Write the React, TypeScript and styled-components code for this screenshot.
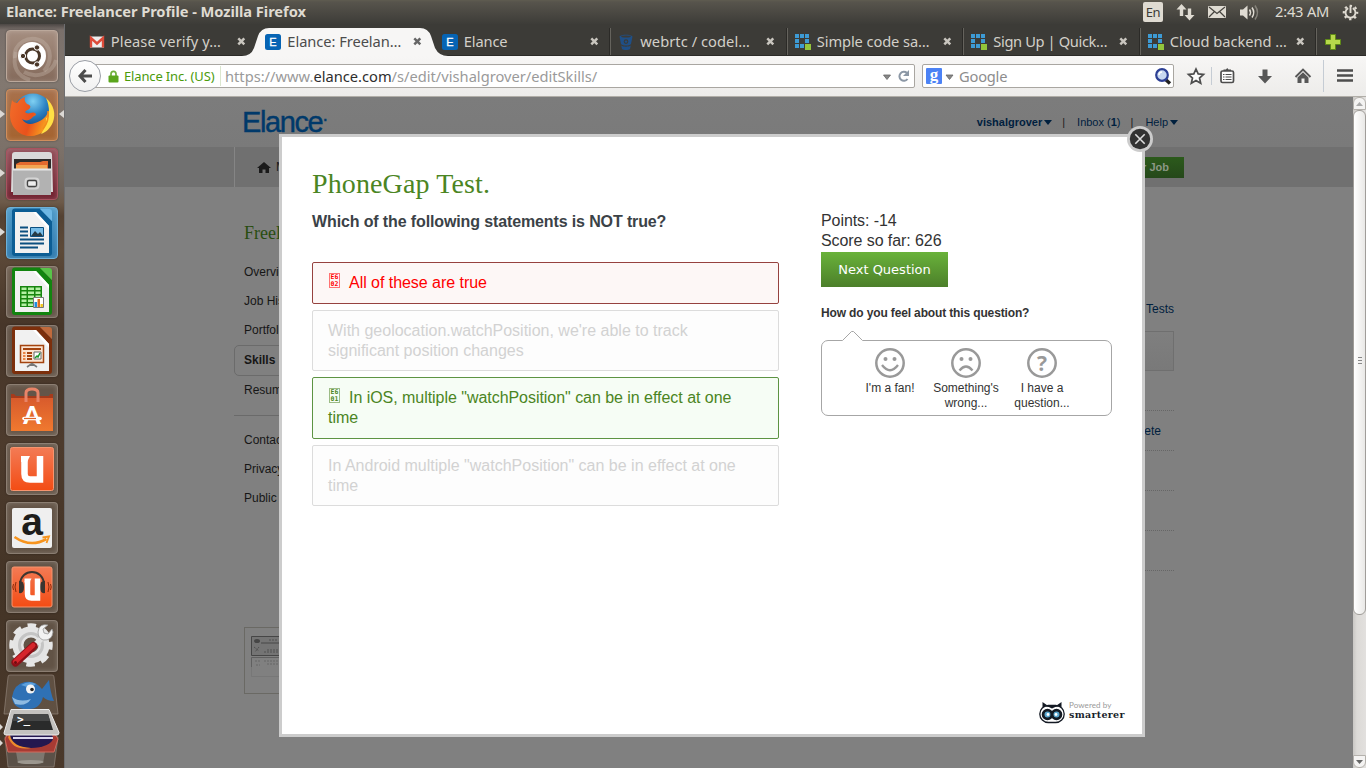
import React from 'react';
import styled, { createGlobalStyle } from 'styled-components';

const GlobalStyle = createGlobalStyle`
  * { box-sizing: border-box; }
  body { margin: 0; overflow: hidden; background: #808080; }
  svg { display: block; flex: none; overflow: visible; }
`;

const ui = '"Noto Sans", "Open Sans", sans-serif';
const arial = '"Liberation Sans", Arial, sans-serif';
const times = '"Liberation Serif", "Times New Roman", serif';

/* ---------- Desktop shell ---------- */
const Desktop = styled.div`
  width: 1366px;
  height: 768px;
  display: flex;
  flex-direction: column;
  overflow: hidden;
  font-family: ${arial};
`;
const Panel = styled.header`
  height: 24px;
  flex: none;
  display: flex;
  align-items: center;
  padding: 0 7px 0 6px;
  background: linear-gradient(#5f5c50 0, #57544c 2px, #3d3c38 24px);
  color: #dfdbd2;
  font-family: ${ui};
`;
const PanelTitle = styled.div`
  flex: 1;
  margin-bottom: 2px;
  font-size: 14.67px;
  font-weight: 700;
  line-height: 22px;
  letter-spacing: -0.06px;
  white-space: nowrap;
`;
const Lang = styled.div`
  width: 20px;
  height: 20px;
  margin-right: 13px;
  border-radius: 2px;
  background: #dfdbd2;
  color: #3c3b37;
  font-size: 13px;
  line-height: 20px;
  text-align: center;
  letter-spacing: -0.5px;
`;
const Clock = styled.div`
  width: 55px;
  margin: 0 12px 2px 13px;
  font-size: 14.67px;
  line-height: 20px;
  letter-spacing: -0.2px;
  white-space: nowrap;
`;
const Below = styled.div`
  flex: 1;
  min-height: 0;
  display: flex;
`;

/* ---------- Launcher ---------- */
const Launcher = styled.aside`
  width: 65px;
  flex: none;
  display: flex;
  flex-direction: column;
  align-items: center;
  gap: 7px;
  padding: 6px 1px 0 0;
  border-right: 1px solid #6e6e70;
  background: linear-gradient(#4c4744 0, #7a706b 6px, #827870 60px, #7b7068 130px, #6e6258 165px, #6d5a49 178px, #544233 192px, #5d4a39 226px, #473629 300px, #4d3b2d 420px, #443426 560px, #4a392b 744px);
`;
const Tile = styled.div<{ $tint: string; $edge?: string }>`
  position: relative;
  width: 52px;
  height: 52px;
  flex: none;
  border-radius: 4px;
  border: 1px solid ${(p) => p.$edge ?? 'rgba(200,190,180,0.4)'};
  background: ${(p) => p.$tint};
  box-shadow: inset 0 0 5px rgba(255, 255, 255, 0.2), 0 0 2px rgba(0, 0, 0, 0.4);
  & > svg { margin: -1px; }
`;
const Pip = styled.i<{ $side: 'left' | 'right' }>`
  position: absolute;
  top: 20px;
  ${(p) => p.$side}: -7px;
  border: 4px solid transparent;
  border-${(p) => p.$side}: 5px solid #dcd9d5;
  border-${(p) => (p.$side === 'left' ? 'right' : 'left')}: 0;
`;
const Stack = styled.div`
  margin: -7px 0 0 -1px;
  width: 64px;
  height: 96px;
  flex: none;
`;

/* ---------- Browser chrome ---------- */
const Browser = styled.main`
  flex: 1;
  min-width: 0;
  display: flex;
  flex-direction: column;
`;
const TabStrip = styled.div`
  height: 32px;
  flex: none;
  display: flex;
  padding-left: 15.5px;
  background: #3c3b37;
  box-shadow: inset 0 -1px 0 #2c2b28;
`;
const TabBox = styled.div<{ $active?: boolean; $sep?: boolean }>`
  position: relative;
  width: 176.5px;
  flex: none;
  height: 32px;
  display: flex;
  align-items: center;
  padding: 3px 11.5px 0 8px;
  font-family: ${ui};
  font-size: 14.67px;
  color: ${(p) => (p.$active ? '#4c4c4c' : '#d3d0c9')};
  &::after {
    content: '';
    display: ${(p) => (p.$sep ? 'block' : 'none')};
    position: absolute;
    right: -1px;
    top: 4px;
    bottom: 1px;
    width: 2px;
    background: linear-gradient(90deg, #2b2a27 50%, #65635d 50%);
  }
`;
const TabShape = styled.svg`
  position: absolute;
  left: -15px;
  top: 0;
`;
const TabLabel = styled.span<{ $ls: number }>`
  position: relative;
  flex: 1;
  margin: 0 0 2px 5.3px;
  line-height: 22px;
  white-space: nowrap;
  letter-spacing: ${(p) => p.$ls}px;
`;
const TabIcon = styled.svg`
  position: relative;
`;
const NavBar = styled.div`
  height: 41px;
  flex: none;
  display: flex;
  align-items: center;
  padding-left: 4px;
  border-bottom: 1px solid #b1aea8;
  background: linear-gradient(#f7f6f5, #edecea);
  font-family: ${ui};
`;
const BackButton = styled.div`
  position: relative;
  width: 32px;
  height: 32px;
  flex: none;
  border: 1px solid #9a9ea6;
  border-radius: 50%;
  background: linear-gradient(#fff, #f0f0f0);
  display: grid;
  place-items: center;
`;
const UrlBar = styled.div`
  width: 829px;
  height: 24px;
  margin-left: -15px;
  padding: 0 4px 0 20.5px;
  flex: none;
  display: flex;
  align-items: center;
  border: 1px solid #a9a6a1;
  border-radius: 2px;
  background: #fff;
  font-size: 14.67px;
  white-space: nowrap;
`;
const Identity = styled.span`
  width: 97px;
  margin-left: 5.5px;
  padding-right: 5px;
  border-right: 1px solid #dbe6cf;
  color: #4b9b0c;
  font-size: 13px;
  line-height: 20px;
  letter-spacing: -0.15px;
`;
const Url = styled.span`
  flex: 1;
  margin-left: 4px;
  color: #9a9a9a;
  letter-spacing: 0;
  b { color: #2e2e2e; font-weight: 400; }
`;
const SearchBar = styled.div`
  width: 252px;
  height: 24px;
  margin-left: 7px;
  padding: 0 1px 0 3px;
  flex: none;
  display: flex;
  align-items: center;
  border: 1px solid #a9a6a1;
  border-radius: 2px;
  background: #fff;
  color: #8d8d8d;
  font-size: 14.67px;
  span { flex: 1; margin-left: 5px; letter-spacing: -0.2px; }
`;
const Tools = styled.div`
  flex: 1;
  height: 100%;
`;

/* ---------- Page behind the dialog ---------- */
const Viewport = styled.div`
  position: relative;
  flex: 1;
  min-height: 0;
  display: flex;
`;
const Page = styled.div`
  flex: 1;
  min-width: 0;
  background: #808080;
  font-size: 12px;
  color: #161616;
`;
const Center = styled.div`
  width: 950px;
  height: 100%;
  margin: 0 auto;
  display: flex;
`;
const SiteHeader = styled.div`
  height: 50px;
  background: linear-gradient(#7c7c7c, #7a7a7a);
`;
const Brand = styled.div`
  flex: 1;
  padding: 7px 0 0 8px;
  color: #00396a;
  font-size: 29px;
  line-height: 36px;
  letter-spacing: -1.4px;
  -webkit-text-stroke: 0.4px #00396a;
  sup { font-size: 18px; line-height: 0; vertical-align: 7px; }
`;
const Account = styled.div`
  display: flex;
  align-items: center;
  height: 50px;
  padding-right: 6px;
  font-size: 11px;
  color: #00203e;
`;
const Caret = styled.i`
  margin-left: 2px;
  border: 4px solid transparent;
  border-top: 5px solid #00203e;
  border-bottom: 0;
`;
const Bar = styled.span`
  margin: 0 12px 0 10px;
  color: #1c1c1c;
`;
const SiteNav = styled.div`
  height: 40px;
  background: #707070;
`;
const NavHome = styled.div`
  flex: 1;
  display: flex;
  align-items: center;
  gap: 5px;
  padding-left: 22px;
  border-left: 1px solid #858585;
  color: #1a1a1a;
`;
const PostJob = styled.div`
  align-self: center;
  width: 100px;
  height: 21px;
  padding-right: 15px;
  text-align: right;
  font-weight: 700;
  font-size: 11px;
  line-height: 21px;
  color: #8c9886;
  background: linear-gradient(#2c5a1c, #25481a);
`;
const SiteBody = styled.div`
  height: 581px;
`;
const SideBar = styled.div`
  width: 200px;
  padding-top: 34px;
`;
const SideTitle = styled.div`
  height: 37px;
  padding: 0 0 0 10px;
  font-family: ${times};
  font-size: 18px;
  line-height: 24px;
  color: #294d10;
`;
const SideItem = styled.div<{ $on?: boolean }>`
  height: ${(p) => (p.$on ? 31 : 29)}px;
  padding-left: ${(p) => (p.$on ? 9 : 10)}px;
  line-height: 29px;
  border: ${(p) => (p.$on ? '1px solid #6b6b6b' : '0')};
  border-radius: 5px;
  font-weight: ${(p) => (p.$on ? 700 : 400)};
`;
const SideRule = styled.div`
  height: 1px;
  margin: 10px 0 10px;
  background: #6a6a6a;
`;
const Thumb = styled.div`
  margin: 114px 0 0 10px;
  height: 67px;
  padding: 8px 0 0 6px;
  border: 1px solid #6a6964;
`;
const Listing = styled.div`
  flex: 1;
  padding: 112px 10px 0 0;
  display: flex;
  flex-direction: column;
  text-align: right;
  color: #00203e;
`;
const ListHead = styled.div`
  height: 32px;
  line-height: 20px;
`;
const ListPanel = styled.div`
  height: 40px;
  border: 1px solid #6f6f6f;
  background: linear-gradient(#7f7f7f, #797979);
`;
const ListRow = styled.div`
  height: 40px;
  padding-right: 13px;
  line-height: 41px;
  border-bottom: 1px dotted #666;
`;

/* ---------- Scrollbar ---------- */
const Scroll = styled.div`
  width: 13px;
  flex: none;
  display: flex;
  flex-direction: column;
  background: linear-gradient(90deg, #c9c7c4, #dcdad7 30%, #e2e0de);
`;
const ScrollButton = styled.div<{ $up?: boolean }>`
  height: 13px;
  display: grid;
  place-items: center;
  background: #f4f3f2;
  border: 1px solid #b4b1ac;
  border-radius: ${(p) => (p.$up ? '6px 6px 0 0' : '0 0 6px 6px')};
`;
const ScrollThumb = styled.div`
  height: 505px;
  margin-bottom: auto;
  display: grid;
  place-items: center;
  border: 1px solid #a09d99;
  border-radius: 6px;
  background: linear-gradient(90deg, #fff, #e9e8e6);
  svg { margin-top: -3px; }
`;

/* ---------- Dialog ---------- */
const Dialog = styled.section`
  position: absolute;
  left: 214px;
  top: 37px;
  width: 866px;
  height: 603px;
  border: 3px solid #ccc;
  background: #fff;
  padding: 0 30px;
  display: flex;
  flex-direction: column;
`;
const CloseButton = styled.div`
  position: absolute;
  right: -11px;
  top: -11px;
`;
const Title = styled.h1`
  margin: 29px 0 0;
  height: 36px;
  font: 400 28px/36px ${times};
  letter-spacing: 0.12px;
  color: #4b8523;
`;
const Columns = styled.div`
  flex: 1;
  display: flex;
  gap: 42px;
`;
const QuestionCol = styled.div`
  width: 467px;
  padding-top: 10px;
`;
const Question = styled.h2`
  margin: 0 0 29px;
  font: 700 16px/20px ${arial};
  letter-spacing: -0.125px;
  height: 21px;
  color: #3b4247;
`;
const tones = {
  wrong: { line: '#96423f', bg: '#fdf7f6', ink: '#ff0000' },
  right: { line: '#5d9443', bg: '#f6fdf5', ink: '#4b8523' },
  idle: { line: '#dcdcdc', bg: '#fdfdfd', ink: '#d2d2d2' },
};
type Tone = keyof typeof tones;
const Answer = styled.div<{ $tone: Tone }>`
  margin-bottom: 6px;
  padding: 10.3px 30px 9.8px 15px;
  border: 1px solid ${(p) => tones[p.$tone].line};
  border-radius: 2px;
  background: ${(p) => tones[p.$tone].bg};
  color: ${(p) => tones[p.$tone].ink};
  font-size: 16px;
  line-height: 19.65px;
  letter-spacing: ${(p) => (p.$tone === 'idle' ? 0 : -0.04)}px;
`;
const HexBox = styled.span`
  display: inline-block;
  overflow: hidden;
  vertical-align: 0;
  width: 11px;
  height: 15px;
  margin: 0 9px 0 1px;
  border: 1px solid color-mix(in srgb, currentColor 55%, white);
  font: 700 6.5px/6.5px "DejaVu Sans Mono", monospace;
  letter-spacing: 0;
  word-break: break-all;
  text-align: center;
`;
const SideCol = styled.div`
  width: 291px;
  padding-top: 9px;
  font-size: 16px;
  line-height: 20px;
  letter-spacing: -0.08px;
  color: #333;
`;
const NextButton = styled.div`
  width: 127px;
  height: 35px;
  margin-top: 1px;
  background: linear-gradient(#69b23a, #4c7f2a);
  color: #fff;
  font: 13px/35px "DejaVu Sans", sans-serif;
  letter-spacing: 0;
  text-align: center;
`;
const Feel = styled.div`
  margin: 19px 0 19px;
  font: 700 12px/15px ${arial};
  letter-spacing: -0.14px;
`;
const Bubble = styled.div`
  position: relative;
  height: 76px;
  padding: 7px 0 0 30px;
  display: flex;
  border: 1px solid #a6a6a6;
  border-radius: 7px;
`;
const Nub = styled.svg`
  position: absolute;
  left: 20px;
  top: -11px;
`;
const Mood = styled.div`
  width: 76px;
  display: flex;
  flex-direction: column;
  align-items: center;
  gap: 3px;
  font-size: 12px;
  line-height: 15px;
  text-align: center;
  letter-spacing: 0;
`;
const Powered = styled.footer`
  height: 25px;
  margin: 0 -16px 9px 0;
  align-self: flex-end;
  display: flex;
  gap: 4px;
  width: 89px;
`;
const PoweredText = styled.div`
  padding-top: 1px;
  white-space: nowrap;
  small { display: block; font: 400 8px/9px Lato, sans-serif; letter-spacing: 0.1px; color: #999; }
  strong { display: block; font: 700 9.5px/9px "DejaVu Serif", serif; color: #1a1f2b; letter-spacing: 0.3px; }
`;

/* ---------- Icons ---------- */
const CloseX = ({ active }: { active?: boolean }) => (
  <TabIcon width="9" height="9" viewBox="0 0 9 9">
    <path d="M1.3 1.3l6 6M7.3 1.3l-6 6" stroke={active ? '#666' : '#c9c6bf'} strokeWidth="2.5" />
  </TabIcon>
);
const Favicon = ({ kind }: { kind: string }) => (
  <TabIcon width="17" height="16" viewBox="0 0 17 16">
    {kind === 'mail' && (
      <g>
        <rect x="1" y="2.5" width="14" height="11" fill="#eee" />
        <path d="M2 13.5V4l6 5.5L14 4v9.5" fill="none" stroke="#dd4b39" strokeWidth="2.4" />
      </g>
    )}
    {kind === 'elance' && (
      <g>
        <rect width="16" height="16" rx="2.5" fill="#0664b4" />
        <text x="8" y="12" textAnchor="middle" fontSize="11" fill="#fff" stroke="#fff" strokeWidth=".3" fontFamily="Liberation Sans">E</text>
      </g>
    )}
    {kind === 'bucket' && (
      <g fill="#1f4f86">
        <path d="M1.5 2.5C3 .3 13 .3 14.5 2.5L13 10c-2 2-8 2-10 0z" />
        <path d="M3.2 11.5c2 1.6 7.600 1.6 9.600 0L12 15c-1.500 1.300-6.500 1.300-8 0z" />
        <ellipse cx="8" cy="2.600" rx="4.800" ry="1" fill="#3c3b37" />
        <circle cx="8" cy="7.600" r="2.300" fill="#3c3b37" />
        <circle cx="8" cy="7.600" r="1.200" />
      </g>
    )}
    {kind === 'blocks' && (
      <g fill="#3d9bd5">
        <path d="M0 0h4v4H0zM5 0h4v4H5zM10 0h4v4h-4zM0 5h4v4H0zM10 5h4v4h-4zM0 10h4v4H0zM5 10h4v4H5z" />
        <path d="M10 10h6v6h-6z" fill="#93c53b" />
      </g>
    )}
  </TabIcon>
);

const UbuntuIcon = () => (
  <svg width="52" height="52">
    <g fill="none" stroke="#c9bbb0" strokeOpacity=".35" strokeWidth="4">
      <path d="M9 28C6 14 24 3 37 12c9 7 9 20 1 29" />
      <path d="M24 50C11 46 6 36 10 22" />
      <path d="M50 30c-4 14-20 19-32 12" />
    </g>
    <circle cx="26" cy="26" r="14" fill="#fff" />
    <circle cx="26.500" cy="26" r="7" fill="none" stroke="#4a3728" strokeWidth="3" />
    <g fill="#4a3728" stroke="#fff" strokeWidth="1">
      <circle cx="17" cy="26" r="2.700" /><circle cx="31" cy="17.500" r="2.700" /><circle cx="31" cy="34.500" r="2.700" />
    </g>
  </svg>
);
const FirefoxIcon = () => (
  <svg width="52" height="52">
    <defs>
      <radialGradient id="globe" cx=".5" cy=".2" r=".75"><stop offset="0" stopColor="#7fd0f2" /><stop offset=".45" stopColor="#2c83c4" /><stop offset="1" stopColor="#0d3d7c" /></radialGradient>
      <linearGradient id="fox" x1="0" x2="1" y1="0" y2=".3"><stop offset="0" stopColor="#f26d2a" /><stop offset=".6" stopColor="#e9521c" /><stop offset="1" stopColor="#f9a71f" /></linearGradient>
    </defs>
    <circle cx="27" cy="24" r="19.500" fill="url(#globe)" />
    <path d="M6 11c1 2 3 3 5 3 2-3 4-5 8-6-1 3 0 5 2 7 3 1 4 2 3 4-1 2-4 2-5 4 1 1 3 2 5 1 3-1 6-1 6 2-1 1-3 1-4 3-3 3-7 3-10 1 3 5 8 6 13 4 6-2 11-5 13-11l5-4c1 14-8 27-21 28C14 48 4 38 4 26c0-6 1-9 2-15z" fill="url(#fox)" />
    <path d="M40 9c8 7 10 16 7 24-3 7-7 10-12 12 4-6 6-11 5-16 2 0 3-3 3-6 0-5-1-10-3-14z" fill="#ffdf45" />
    <path d="M42 22c1 7-1 13-5 18" fill="none" stroke="#f28a1c" strokeWidth="1.500" />
  </svg>
);
const FilesIcon = () => (
  <svg width="52" height="52">
    <path d="M6 7q0-3 3-3h34q3 0 3 3l1 37H5z" fill="#d9d9d9" />
    <path d="M8 11h37v12H8z" fill="#2d2b2a" />
    <path d="M10 16l4-2h20l3-1h5v9H10z" fill="#e46a2e" /><path d="M10 17h31v5H10z" fill="#f3a552" />
    <path d="M7 21h38v26H7z" fill="#b2b2b2" /><path d="M7 20.500h38v2H7z" fill="#e6e6e6" />
    <rect x="19.500" y="30.500" width="13" height="10" rx="3" fill="none" stroke="#d5d5d5" strokeWidth="2" />
    <rect x="21.500" y="32.500" width="9" height="6" rx="1.500" fill="#eee" stroke="#444" strokeWidth="1.300" />
  </svg>
);
const DocBase = ({ color, light, children }: { color: string; light: string; children: React.ReactNode }) => (
  <svg width="52" height="52">
    <path d="M9 1.500h25l12 13V46q0 3-3 3H9q-3 0-3-3V4.500q0-3 3-3z" fill={color} />
    <path d="M34 2h9q3 0 3 3v9z" fill={light} />
    <path d="M9 5h21l13 14v27H9z" fill="#f1f1f1" /><path d="M30 5l13 14v4L27 5z" fill="#fff" />
    {children}
  </svg>
);
const WriterIcon = () => (
  <DocBase color="#0c5d94" light="#6db7e4">
    <path d="M14 20.500h8M14 24.500h8M14 28.500h8M14 32.500h24M14 36.500h24M14 40.500h18" stroke="#0b4f80" strokeWidth="2" />
    <path d="M24.500 20.500h13v9h-13z" fill="#77bde8" stroke="#0b4f80" /><path d="M25 29l4-5 3 3 2-2 3 4z" fill="#263b45" />
  </DocBase>
);
const CalcIcon = () => (
  <DocBase color="#12840f" light="#58c449">
    <path d="M14 20h22v21H14z" fill="#17850f" />
    <g fill="#b4f0a4">{[21.500, 25.500, 29.500, 33.500, 37.500].map((y) => <path key={y} d={`M15.500 ${y}h5v2.500h-5zM22 ${y}h6v2.500h-6zM29.500 ${y}h5v2.500h-5z`} />)}</g>
    <path d="M27.500 31.500h10v10h-10z" fill="#fff" stroke="#777" />
    <path d="M28.500 36h2.500v5h-2.500z" fill="#1d8de0" /><path d="M31.500 33h2.500v8h-2.500z" fill="#e06b1b" /><path d="M34.500 38h2.400v3h-2.400z" fill="#f0c419" />
  </DocBase>
);
const ImpressIcon = () => (
  <DocBase color="#7c2f0c" light="#c06a3c">
    <path d="M14.500 20.500h23v17h-23z" fill="#fbe3d1" stroke="#a4430f" strokeWidth="1.500" />
    <path d="M17 24h18M21 28h5M21 31h5M21 34h5" stroke="#a4430f" strokeWidth="2" /><path d="M17 28h2.500M17 31h2.500M17 34h2.500" stroke="#e98446" strokeWidth="2" />
    <path d="M28 27h7v7h-7z" fill="#fff" stroke="#666" /><path d="M29 33l2-2 1 1 2-4" stroke="#18962a" fill="none" strokeWidth="1.500" />
    <path d="M21 42l5-3.500 5 3.500M26 38v3" stroke="#777" fill="none" strokeWidth="1.600" />
  </DocBase>
);
const SoftwareIcon = () => (
  <svg width="52" height="52">
    <defs><linearGradient id="bag" x1="0" x2="0" y1="0" y2="1"><stop offset="0" stopColor="#d85b2c" /><stop offset="1" stopColor="#f0792f" /></linearGradient></defs>
    <path d="M5 15V10h3l2 2h33l1-2h3v5z" fill="#a53b1c" /><path d="M5 14h42v33H5z" fill="url(#bag)" />
    <path d="M20 18V9q0-4 6-4t6 4v9" fill="none" stroke="#e88468" strokeWidth="3" />
    <text x="26" y="40" textAnchor="middle" fontFamily="Lato" fontWeight="900" fontSize="25" fill="#fff">A</text>
    <path d="M18 34.500h16" stroke="#fff" strokeWidth="3.600" strokeLinecap="round" /><path d="M18 34.500h12" stroke="#e2652a" strokeWidth="1.200" />
  </svg>
);
const OneIcon = ({ music }: { music?: boolean }) => (
  <svg width="52" height="52">
    <defs><linearGradient id="one" x1="0" x2="0" y1="0" y2="1"><stop offset="0" stopColor="#f37b55" /><stop offset="1" stopColor="#f34c14" /></linearGradient></defs>
    <rect x={music ? 6 : 4.500} y={music ? 6 : 4.500} width={music ? 40 : 43} height={music ? 40 : 43} rx="2" fill="url(#one)" stroke="#f6956f" />
    {music ? (
      <g>
        <path d="M14 26V23C15 7 37 7 38 23v3" fill="none" stroke="#3b3530" strokeWidth="2" />
        <path d="M13 20q5-1 5 6t-5 6zM39 20q-5-1-5 6t5 6z" fill="#3b3530" />
        <path d="M10 21q-2 5 0 10M42 21q2 5 0 10M7.500 23q-1.500 3 0 6M44.500 23q1.500 3 0 6" fill="none" stroke="#8b2a0b" />
        <path d="M21.500 20v13q0 4 4 4h6V17.500" fill="none" stroke="#fff" strokeWidth="5.500" />
        <path d="M18.500 17.500h7l-2 4h-5z" fill="#fff" />
      </g>
    ) : (
      <g><path d="M18.500 17v14q0 5.500 5.500 5.500h10V13" fill="none" stroke="#fff" strokeWidth="6.500" /><path d="M15 13h9l-3 6h-6z" fill="#fff" /></g>
    )}
  </svg>
);
const AmazonIcon = () => (
  <svg width="52" height="52">
    <rect x="6" y="6" width="40" height="40" rx="2" fill="#efefef" />
    <text x="26" y="33" textAnchor="middle" fontFamily="Liberation Sans" fontWeight="700" fontSize="39" fill="#1d1d1b">a</text>
    <path d="M8.500 35q16 11 32 2" fill="none" stroke="#f7941e" strokeWidth="2.600" /><path d="M36.500 35.500l6.500-1-2.500 6.500" fill="none" stroke="#f7941e" strokeWidth="1.800" />
  </svg>
);
const SettingsIcon = () => (
  <svg width="52" height="52">
    <circle cx="25" cy="25" r="13" fill="none" stroke="#e4e4e4" strokeWidth="11" />
    <circle cx="25" cy="25" r="19.500" fill="none" stroke="#e6e6e6" strokeWidth="4.500" strokeDasharray="8.500 6.810" strokeDashoffset="4" />
    <circle cx="25" cy="25" r="11.500" fill="none" stroke="#c4c4c4" strokeWidth="3" />
    <path d="M28 26L40 14" stroke="#e3e3e3" strokeWidth="5.500" />
    <path d="M42 5q-9-2-10 7 0 6 5 8 9 1 10-8l-1-3-4 5-4-1-1-4z" fill="#f2f2f2" stroke="#999" strokeWidth=".8" />
    <path d="M9.500 42.500L27.500 26" stroke="#8f1017" strokeWidth="8" strokeLinecap="round" /><path d="M9.500 41.500L27 25.500" stroke="#d5252b" strokeWidth="5" strokeLinecap="round" />
    <circle cx="9.500" cy="42.500" r="1.500" fill="#6f0c10" />
  </svg>
);
const FoldedIcons = () => (
  <svg width="64" height="96" viewBox="0 672 64 96">
    <path d="M11 675h42q2 0 2 2l4 37H5l4-37q0-2 2-2z" fill="#77695c" fillOpacity=".5" stroke="#9b8e83" strokeOpacity=".6" />
    <path d="M13 697q2-13 13-15 10-2 17 7l7-9q1 8 2 12 1 5 3 9-7 0-11-4-3 12-14 12-16 1-17-12z" fill="#2f71b5" />
    <path d="M13 697q8 6 19 2-5 8-16 5z" fill="#8fbbe2" /><path d="M22 685q8-5 15-1l-6 4z" fill="#5da0dc" />
    <circle cx="31.500" cy="689" r="4.500" fill="#f4f4f4" /><circle cx="33" cy="689.500" r="1.800" fill="#222" />
    <path d="M6 737l3 30h46l4-30z" fill="#5b5148" stroke="#8f857a" strokeOpacity=".7" />
    <path d="M17 752h29l-2 11q-12 2-25 0z" fill="#7d776f" /><ellipse cx="31.500" cy="762" rx="13" ry="2" fill="#9c978f" />
    <path d="M6 739l4-8h44l5 8-4 13H9z" fill="#a83b33" stroke="#d36b5c" />
    <ellipse cx="32" cy="738" rx="22" ry="10" fill="#24184f" /><path d="M11 735q2 12 21 13-18 3-23-11z" fill="#ee8b2c" /><path d="M14 738h40" stroke="#ddd9ef" strokeWidth="2" />
    <path d="M12 709.500h38l10 23q0 2.500-2 2.500H7q-2 0-2-2z" fill="#c4c2bf" stroke="#eee" />
    <path d="M15 714h34l5 16H11z" fill="#2a2b2b" /><path d="M15 714h34l2 7H13z" fill="#454646" />
    <text x="18" y="723" fontFamily="DejaVu Sans Mono" fontWeight="700" fontSize="11" fill="#fff">&gt;_</text>
    <path d="M0 723l4 4-4 4zM0 739l4 4-4 4z" fill="#dcd9d5" />
  </svg>
);

const apps: { icon: React.ReactNode; tint: string; edge?: string; left?: boolean; right?: boolean }[] = [
  { icon: <UbuntuIcon />, tint: 'linear-gradient(#a58e80,#846a5b)', edge: '#bba89b' },
  { icon: <FirefoxIcon />, tint: 'linear-gradient(#a8714c,#a5632f)', edge: '#d08e5c', left: true, right: true },
  { icon: <FilesIcon />, tint: 'linear-gradient(#94505a,#701f2d)', edge: '#a8525f', left: true },
  { icon: <WriterIcon />, tint: 'linear-gradient(#4f9bc9,#2d79ad)', edge: '#6db1d9', left: true },
  { icon: <CalcIcon />, tint: 'rgba(150,138,125,.35)' },
  { icon: <ImpressIcon />, tint: 'rgba(150,138,125,.35)' },
  { icon: <SoftwareIcon />, tint: 'rgba(150,138,125,.35)' },
  { icon: <OneIcon />, tint: 'rgba(150,138,125,.35)' },
  { icon: <AmazonIcon />, tint: 'rgba(150,138,125,.35)' },
  { icon: <OneIcon music />, tint: 'rgba(150,138,125,.35)' },
  { icon: <SettingsIcon />, tint: 'rgba(150,138,125,.35)' },
];

const tabs = [
  { label: 'Please verify y…', kind: 'mail', ls: 0.1 },
  { label: 'Elance: Freelan…', kind: 'elance', ls: -0.05, active: true },
  { label: 'Elance', kind: 'elance', ls: -0.15, sep: true },
  { label: 'webrtc / codel…', kind: 'bucket', ls: 0.05, sep: true },
  { label: 'Simple code sa…', kind: 'blocks', ls: -0.1, sep: true },
  { label: 'Sign Up | Quick…', kind: 'blocks', ls: -0.37, sep: true },
  { label: 'Cloud backend …', kind: 'blocks', ls: -0.05, sep: true },
];

const answers: { tone: Tone; code?: string; text: string }[] = [
  { tone: 'wrong', code: 'E602', text: 'All of these are true' },
  { tone: 'idle', text: "With geolocation.watchPosition, we're able to track significant position changes" },
  { tone: 'right', code: 'E601', text: 'In iOS, multiple "watchPosition" can be in effect at one time' },
  { tone: 'idle', text: 'In Android multiple "watchPosition" can be in effect at one time' },
];

const Indicators = () => (
  <svg width="86" height="24" viewBox="1176 0 86 24" fill="#dfdbd2">
    <path d="M1181.500 4l5 5.500h-3.300V16h-3.400V9.500h-3.300zM1189.500 20.500l-5-5.500h3.300V8.500h3.400V15h3.300z" />
    <rect x="1208" y="6" width="18" height="12" rx="1" />
    <path d="M1209 7l8 6.500 8-6.500M1209 17l5.500-5.500M1225 17l-5.500-5.500" fill="none" stroke="#45433e" strokeWidth="1.200" />
    <path d="M1240 9.500h3l4.500-4v14l-4.500-4h-3z" />
    <g fill="none" stroke="#dfdbd2" strokeWidth="1.500"><path d="M1249.500 9.500q2 3 0 6" /><path d="M1252 7.500q3.500 5 0 10" /><path d="M1255 5.500q5 7 0 14" stroke="#85827a" /></g>
  </svg>
);
const PowerIcon = () => (
  <svg width="17" height="17" viewBox="-8.500 -8.500 17 17" stroke="#dfdbd2" fill="none">
    <circle r="6.700" strokeWidth="2.200" strokeDasharray="2.300 2.960" strokeDashoffset="1" />
    <path d="M-2.300-4.300A5 5 0 1 0 2.300-4.300M0-6.500V.5" strokeWidth="1.900" />
  </svg>
);
const ToolIcons = () => (
  <svg width="192" height="40" viewBox="1174 56 192 40" fill="#4d4d4d">
    <path d="M1196 69l2.200 4.900 5.300.5-4 3.600 1.200 5.200-4.700-2.800-4.700 2.800 1.200-5.200-4-3.600 5.300-.5z" fill="#fdfdfd" stroke="#4d4d4d" strokeWidth="1.700" />
    <path d="M1211.500 67v18M1323.500 60v32" stroke="#c5ccd4" />
    <rect x="1221" y="71" width="12.500" height="11.500" rx="1.500" fill="#fdfdfd" stroke="#4d4d4d" strokeWidth="1.700" />
    <path d="M1223.500 71v-1.500h2.500l1.200-1.500 1.300 1.500h2.500V71z" />
    <path d="M1223 74.500h1.500M1223 77h1.500M1223 79.500h1.500M1225.500 74.500h6M1225.500 77h6M1225.500 79.500h6" stroke="#4d4d4d" strokeWidth="1.200" />
    <path d="M1262.500 69.500h5V76h4.500l-7 7.500-7-7.500h4.500z" fill="#575757" />
    <path d="M1295.500 77l7.500-7.500 7.500 7.500" fill="none" stroke="#575757" strokeWidth="1.900" />
    <path d="M1297.500 77.500l5.500-5.300 5.500 5.300v5.500h-4v-4.500h-3V83h-4z" fill="#575757" />
    <path d="M1337 70.500h16M1337 75.500h16M1337 80.500h16" stroke="#4d4d4d" strokeWidth="2.600" />
  </svg>
);

const Mouths = [
  <g key="a"><circle cx="10.500" cy="11" r="2" fill="#999" /><circle cx="19.500" cy="11" r="2" fill="#999" /><path d="M7 17q8 10.500 16 0" fill="none" stroke="#999" strokeWidth="2.300" /></g>,
  <g key="b"><circle cx="10.500" cy="11" r="2" fill="#999" /><circle cx="19.500" cy="11" r="2" fill="#999" /><path d="M8.500 22.500q6.500-8 13 0" fill="none" stroke="#999" strokeWidth="2.300" /></g>,
  <text key="c" x="15" y="23" textAnchor="middle" fontFamily="Open Sans" fontWeight="700" fontSize="21" fill="#999">?</text>,
];
const moods = ["I'm a fan!", "Something's wrong...", 'I have a question...'];

export default function App() {
  return (
    <Desktop>
      <GlobalStyle />
      <Panel>
        <PanelTitle>Elance: Freelancer Profile - Mozilla Firefox</PanelTitle>
        <Lang>En</Lang>
        <Indicators />
        <Clock>2:43 AM</Clock>
        <PowerIcon />
      </Panel>
      <Below>
        <Launcher>
          {apps.map((a, i) => (
            <Tile key={i} $tint={a.tint} $edge={a.edge}>
              {a.icon}
              {a.left && <Pip $side="left" />}
              {a.right && <Pip $side="right" />}
            </Tile>
          ))}
          <Stack><FoldedIcons /></Stack>
        </Launcher>
        <Browser>
          <TabStrip>
            {tabs.map((t, i) => (
              <TabBox key={i} $active={t.active} $sep={t.sep}>
                {t.active && (
                  <TabShape width="206" height="32" viewBox="242 24 206 32">
                    <path d="M242 56q9 0 12-8l4-12q3-8 11-8h151q8 0 11 8l4 12q4 8 13 8z" fill="#f7f6f5" />
                  </TabShape>
                )}
                <Favicon kind={t.kind} />
                <TabLabel $ls={t.ls}>{t.label}</TabLabel>
                <CloseX active={t.active} />
              </TabBox>
            ))}
            <svg width="36" height="32" viewBox="1316 24 36 32">
              <path d="M1330.500 34.500h5v5h5v5h-5v5h-5v-5h-5v-5h5z" fill="#b7d84b" stroke="#5f8a16" />
            </svg>
          </TabStrip>
          <NavBar>
            <BackButton>
              <svg width="14" height="14" viewBox="0 0 14 14"><path d="M7.500 1L2 7l5.500 6M2 7h12" fill="none" stroke="#4d4d4d" strokeWidth="3" /></svg>
            </BackButton>
            <UrlBar>
              <svg width="11" height="13" viewBox="0 0 11 13"><path d="M3 6V4q0-2.700 2.500-2.700T8 4v2" fill="none" stroke="#6fb03a" strokeWidth="1.700" /><rect x=".5" y="5.500" width="10" height="7" rx="1" fill="#5aa51c" /></svg>
              <Identity>Elance Inc. (US)</Identity>
              <Url>https://www.<b>elance.com</b>/s/edit/vishalgrover/editSkills/</Url>
              <svg width="28" height="14" viewBox="882 69 28 14">
                <path d="M883.500 75h7l-3.500 4.500z" fill="#888" stroke="#666" strokeWidth=".8" />
                <path d="M907.500 79a4.500 4.500 0 1 1-.5-6" fill="none" stroke="#8c98a6" strokeWidth="2" /><path d="M909 70v6h-6z" fill="#8c98a6" />
              </svg>
            </UrlBar>
            <SearchBar>
              <svg width="28" height="16">
                <rect width="16" height="16" rx="1" fill="#4b82f5" />
                <text x="8" y="12" textAnchor="middle" fontFamily="Liberation Serif" fontWeight="700" fontSize="17" fill="#fff">g</text>
                <path d="M20 7h7l-3.500 4.500z" fill="#888" stroke="#666" strokeWidth=".8" />
              </svg>
              <span>Google</span>
              <svg width="18" height="18"><path d="M11 12l5 4.500" stroke="#222" strokeWidth="3.500" /><circle cx="8" cy="8" r="5.800" fill="#c8d8f0" stroke="#2c3f94" strokeWidth="2.200" /><path d="M5 8q0-3 3-3" stroke="#fff" fill="none" strokeWidth="1.500" /></svg>
            </SearchBar>
            <Tools><ToolIcons /></Tools>
          </NavBar>
          <Viewport>
            <Page>
              <SiteHeader>
                <Center>
                  <Brand>Elance<sup>·</sup></Brand>
                  <Account>
                    <b>vishalgrover</b><Caret /><Bar>|</Bar>
                    <span>Inbox (<b>1</b>)</span><Bar>|</Bar>
                    <span>Help</span><Caret />
                  </Account>
                </Center>
              </SiteHeader>
              <SiteNav>
                <Center>
                  <NavHome>
                    <svg width="14" height="11" viewBox="0 0 14 11"><path d="M7 0l7 6h-2v5H8.500V7.500h-3V11H2V6H0z" fill="#1a1a1a" /></svg>
                    My Jobs
                  </NavHome>
                  <PostJob>Post Your Job</PostJob>
                </Center>
              </SiteNav>
              <SiteBody>
                <Center>
                  <SideBar>
                    <SideTitle>Freelancer</SideTitle>
                    <SideItem>Overview</SideItem>
                    <SideItem>Job History</SideItem>
                    <SideItem>Portfolio</SideItem>
                    <SideItem $on>Skills</SideItem>
                    <SideItem>Resume</SideItem>
                    <SideRule />
                    <SideItem>Contact</SideItem>
                    <SideItem>Privacy</SideItem>
                    <SideItem>Public</SideItem>
                    <Thumb>
                      <svg width="60" height="42" fill="none">
                        <path d="M.5.500h59v19H.5z" stroke="#464646" fill="#747474" />
                        <path d="M10 7h50" stroke="#464646" /><ellipse cx="6" cy="5" rx="3" ry="2" fill="#464646" />
                        <path d="M18 4h8M3 11l5 4M8 11l-4 5M16 14h12M13 16h15" stroke="#505050" strokeDasharray="2 1" />
                        <path d="M.5 21.500h59v19H.5z" stroke="#777" /><path d="M.5 31V21.500h59" stroke="#606060" />
                        <path d="M4 25h5M5 29h4M13 25h14M16 28h12" stroke="#666" strokeDasharray="2 1" />
                      </svg>
                    </Thumb>
                  </SideBar>
                  <Listing>
                    <ListHead>Tests</ListHead>
                    <ListPanel />
                    <ListRow />
                    <ListRow>Delete</ListRow>
                    <ListRow />
                    <ListRow />
                    <ListRow />
                  </Listing>
                </Center>
              </SiteBody>
            </Page>
            <Scroll>
              <ScrollButton $up><svg width="7" height="4"><path d="M0 4l3.500-4L7 4z" fill="#aaa" /></svg></ScrollButton>
              <ScrollThumb><svg width="4" height="8"><path d="M0 .5h4M0 3.500h4M0 6.500h4" stroke="#888" /></svg></ScrollThumb>
              <ScrollButton><svg width="7" height="4"><path d="M0 0h7L3.500 4z" fill="#666" /></svg></ScrollButton>
            </Scroll>
            <Dialog>
              <CloseButton>
                <svg width="26" height="26" viewBox="0 0 26 26"><circle cx="13" cy="13" r="13" fill="#ccc" /><circle cx="13" cy="13" r="10.200" fill="#333" /><path d="M8.300 8.300l9.400 9.400M17.700 8.300l-9.400 9.400" stroke="#ddd" strokeWidth="1.600" /></svg>
              </CloseButton>
              <Title>PhoneGap Test.</Title>
              <Columns>
                <QuestionCol>
                  <Question>Which of the following statements is NOT true?</Question>
                  {answers.map((a) => (
                    <Answer key={a.text} $tone={a.tone}>
                      {a.code && <HexBox>{a.code}</HexBox>}
                      {a.text}
                    </Answer>
                  ))}
                </QuestionCol>
                <SideCol>
                  <div>Points: -14</div>
                  <div>Score so far: 626</div>
                  <NextButton>Next Question</NextButton>
                  <Feel>How do you feel about this question?</Feel>
                  <Bubble>
                    <Nub width="22" height="12" viewBox="0 0 22 12"><path d="M0 11L9.500 1.500h2L21 11v1H0z" fill="#fff" /><path d="M.5 10.500l9-9h2l9 9" fill="none" stroke="#a6a6a6" /></Nub>
                    {moods.map((m, i) => (
                      <Mood key={m}>
                        <svg width="30" height="30"><circle cx="15" cy="15" r="13.700" fill="#fff" stroke="#999" strokeWidth="2.500" />{Mouths[i]}</svg>
                        {m}
                      </Mood>
                    ))}
                  </Bubble>
                </SideCol>
              </Columns>
              <Powered>
                <svg width="26" height="24" viewBox="0 0 26 24">
                  <path d="M3.500 7V2l5 3.500h9l5-3.500v5z" fill="#141a24" />
                  <rect x=".8" y="5.500" width="24.400" height="17" rx="8.500" fill="#fff" stroke="#141a24" strokeWidth="1.300" />
                  <path d="M4 7q4-1.500 9 1.500Q18 5.500 22 7l-4-2H8z" fill="#141a24" />
                  <circle cx="8.500" cy="14.500" r="4.400" fill="#5aa6cf" stroke="#141a24" strokeWidth="2.800" /><circle cx="17.500" cy="14.500" r="4.400" fill="#5aa6cf" stroke="#141a24" strokeWidth="2.800" />
                  <circle cx="9" cy="14.500" r="1.400" fill="#fff" /><circle cx="17" cy="14.500" r="1.400" fill="#fff" />
                </svg>
                <PoweredText><small>Powered by</small><strong>smarterer</strong></PoweredText>
              </Powered>
            </Dialog>
          </Viewport>
        </Browser>
      </Below>
    </Desktop>
  );
}
